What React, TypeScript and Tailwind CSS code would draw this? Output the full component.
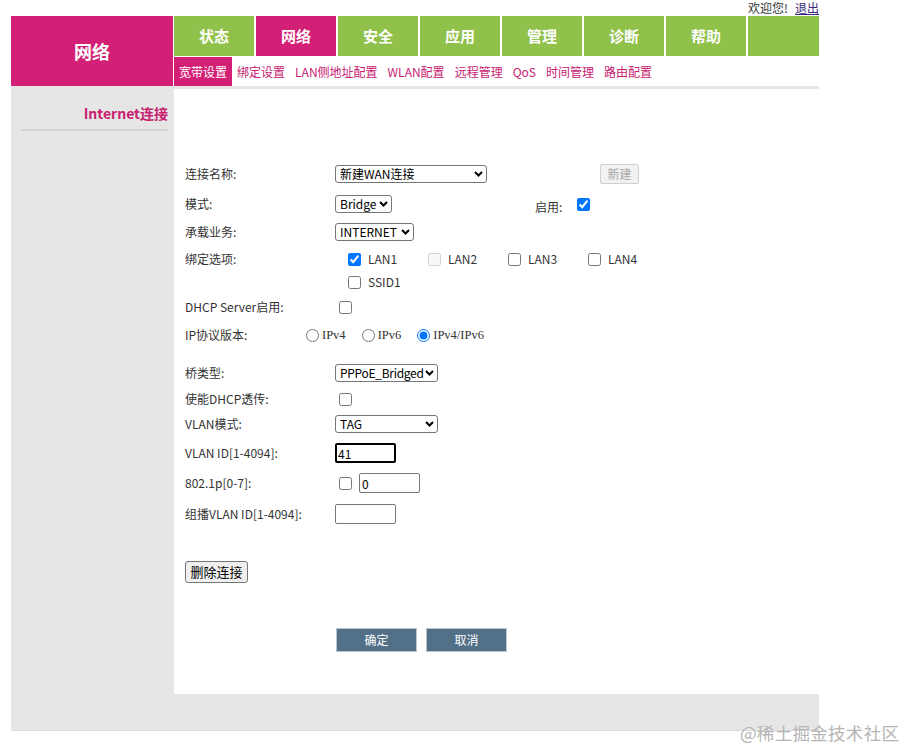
import React from 'react';

const tabs = ['状态', '网络', '安全', '应用', '管理', '诊断', '帮助'];
const subTabs = ['宽带设置', '绑定设置', 'LAN侧地址配置', 'WLAN配置', '远程管理', 'QoS', '时间管理', '路由配置'];

function Label({ children, w = 'w-[150px]' }: { children: React.ReactNode; w?: string }) {
  return <div className={`${w} shrink-0 text-[12px] text-[#333]`}>{children}</div>;
}

// 下拉框：去掉原生外观，自己画箭头
function Select({ value, w, tight = false }: { value: string; w: string; tight?: boolean }) {
  return (
    <div className={`relative ${w} h-[18px] shrink-0`}>
      <select
        defaultValue={value}
        className={`block appearance-none w-full h-full border border-[#767676] rounded-[3px] bg-white text-[12px] leading-[16px] text-black pl-[4px] pr-[10px] outline-none ${
          tight ? 'tracking-[-0.3px]' : ''
        }`}
      >
        <option value={value}>{value}</option>
      </select>
      <svg
        className="absolute right-[4px] top-[6px] w-[9px] h-[6px] pointer-events-none"
        viewBox="0 0 9 6"
        fill="none"
        stroke="#000"
        strokeWidth={2}
      >
        <path d="M1 1l3.5 3.5L8 1" />
      </svg>
    </div>
  );
}

function Check({ checked = false, disabled = false, className = '' }: { checked?: boolean; disabled?: boolean; className?: string }) {
  return (
    <input
      type="checkbox"
      defaultChecked={checked}
      disabled={disabled}
      className={`w-[13px] h-[13px] m-0 shrink-0 ${className}`}
    />
  );
}

function Radio({ label, checked = false }: { label: string; checked?: boolean }) {
  return (
    <label className="flex items-center">
      <input type="radio" name="ipver" defaultChecked={checked} className="w-[13px] h-[13px] m-0" />
      <span className="ml-[3px] font-['Liberation_Serif',serif] text-[12.5px] text-[#333]">{label}</span>
    </label>
  );
}

function BindItem({ label, checked = false, disabled = false }: { label: string; checked?: boolean; disabled?: boolean }) {
  return (
    <div className="w-[80px] flex items-center">
      <Check checked={checked} disabled={disabled} />
      <span className="ml-[7px] text-[12px] text-[#333]">{label}</span>
    </div>
  );
}

export default function App() {
  return (
    <div className="w-[906px] min-h-[749px] bg-white relative font-['Noto_Sans_CJK_SC','Microsoft_YaHei',sans-serif]">
      <div className="ml-[11px] w-[808px]">
        {/* 顶部欢迎 */}
        <div className="h-4 flex justify-end items-start text-[12px] leading-[15px] text-[#333]">
          <span>欢迎您!</span>
          <a href="#" className="ml-[7px] underline text-[#3b2a7a]">退出</a>
        </div>

        {/* 头部导航 */}
        <div className="flex h-[70px]">
          <div className="w-[162px] bg-[#d31f75] flex items-center justify-center text-white text-[18px] font-bold">
            网络
          </div>
          <div className="w-px" />
          <div className="flex-1 flex flex-col">
            <div className="flex h-[40px] gap-[2px]">
              {tabs.map((t) => (
                <div
                  key={t}
                  className={`w-[80px] flex items-center justify-center text-white text-[15px] font-bold ${
                    t === '网络' ? 'bg-[#d31f75]' : 'bg-[#8fc14b]'
                  }`}
                >
                  {t}
                </div>
              ))}
              <div className="flex-1 bg-[#8fc14b]" />
            </div>
            <div className="h-px" />
            <div className="flex h-[29px]">
              {subTabs.map((t, i) => (
                <div
                  key={t}
                  className={`px-[5px] flex items-center text-[12px] ${
                    i === 0 ? 'bg-[#d31f75] text-white' : 'text-[#c8206f]'
                  }`}
                >
                  {t}
                </div>
              ))}
            </div>
          </div>
        </div>

        {/* 主体 */}
        <div className="bg-[#e6e6e6] pb-9 border-b border-[#dcdcdc]">
          <div className="flex">
            <div className="w-[163px] shrink-0 pl-[10px] pr-[6px] pt-[17px]">
              <div className="text-right text-[14px] font-bold text-[#c8206f] leading-[20px] pb-[6px] border-b-2 border-[#d2d2d2]">
                Internet连接
              </div>
            </div>
            <div className="flex-1 mt-[3px] h-[605px] bg-white pl-[11px] pt-[72px]">
              {/* 连接名称 */}
              <div className="flex items-center h-[26px]">
                <Label>连接名称:</Label>
                <Select value="新建WAN连接" w="w-[152px]" />
                <button
                  disabled
                  className="ml-[113px] w-[39px] h-[20px] border border-[#d0d0d0] rounded-[2px] bg-[#f2f2f2] text-[12px] text-[#a8a8a8]"
                >
                  新建
                </button>
              </div>

              {/* 模式 */}
              <div className="flex items-center h-[26px] mt-[4px]">
                <Label>模式:</Label>
                <Select value="Bridge" w="w-[57px]" />
                <span className="ml-[143px] mt-[5px] text-[12px] text-[#333]">启用:</span>
                <Check checked className="ml-[15px]" />
              </div>

              {/* 承载业务 */}
              <div className="flex items-center h-[26px] mt-[2px]">
                <Label>承载业务:</Label>
                <Select value="INTERNET" w="w-[79px]" />
              </div>

              {/* 绑定选项 */}
              <div className="flex items-center h-[26px] mt-px">
                <Label w="w-[163px]">绑定选项:</Label>
                <BindItem label="LAN1" checked />
                <BindItem label="LAN2" disabled />
                <BindItem label="LAN3" />
                <BindItem label="LAN4" />
              </div>
              <div className="flex items-center h-[20px] pl-[163px]">
                <BindItem label="SSID1" />
              </div>

              {/* DHCP Server */}
              <div className="flex items-center h-[26px] mt-[2px]">
                <Label>DHCP Server启用:</Label>
                <Check className="ml-[4px]" />
              </div>

              {/* IP协议版本 */}
              <div className="flex items-center h-[26px] mt-[2px]">
                <Label w="w-[121px]">IP协议版本:</Label>
                <div className="flex items-center gap-[16px]">
                  <Radio label="IPv4" />
                  <Radio label="IPv6" />
                  <Radio label="IPv4/IPv6" checked />
                </div>
              </div>

              {/* 桥类型 */}
              <div className="flex items-center h-[26px] mt-[12px]">
                <Label>桥类型:</Label>
                <Select value="PPPoE_Bridged" w="w-[103px]" tight />
              </div>

              <div className="flex items-center h-[26px]">
                <Label>使能DHCP透传:</Label>
                <Check className="ml-[4px]" />
              </div>

              <div className="flex items-center h-[24px]">
                <Label>VLAN模式:</Label>
                <Select value="TAG" w="w-[103px]" />
              </div>

              <div className="flex items-center h-[26px] mt-[4px]">
                <Label>VLAN ID[1-4094]:</Label>
                <input
                  defaultValue="41"
                  className="w-[61px] h-[20px] border-2 border-black rounded-[2px] px-[1px] text-[12px] text-black outline-none"
                />
              </div>

              <div className="flex items-center h-[26px] mt-[4px]">
                <Label>802.1p[0-7]:</Label>
                <Check className="ml-[4px]" />
                <input
                  defaultValue="0"
                  className="ml-[7px] w-[61px] h-[20px] border border-[#767676] rounded-[2px] px-[2px] text-[12px] text-black outline-none"
                />
              </div>

              <div className="flex items-center h-[26px] mt-[5px]">
                <Label>组播VLAN ID[1-4094]:</Label>
                <input className="w-[61px] h-[20px] border border-[#767676] rounded-[2px] px-[2px] text-[12px] outline-none" />
              </div>

              <button className="mt-[34px] w-[63px] h-[22px] border border-[#767676] rounded-[3px] bg-[#efefef] text-[13px] text-black">
                删除连接
              </button>

              <div className="mt-[45px] flex gap-[9px] pl-[151px]">
                <button className="w-[81px] h-[24px] bg-[#527189] border border-[#b9c7d2] text-white text-[12px]">
                  确定
                </button>
                <button className="w-[81px] h-[24px] bg-[#527189] border border-[#b9c7d2] text-white text-[12px]">
                  取消
                </button>
              </div>
            </div>
          </div>
        </div>
      </div>

      {/* 水印 */}
      <div className="absolute left-[740px] top-[720px] text-[17.5px] text-[#b5b5b5] tracking-[0.3px]">
        @稀土掘金技术社区
      </div>
    </div>
  );
}
